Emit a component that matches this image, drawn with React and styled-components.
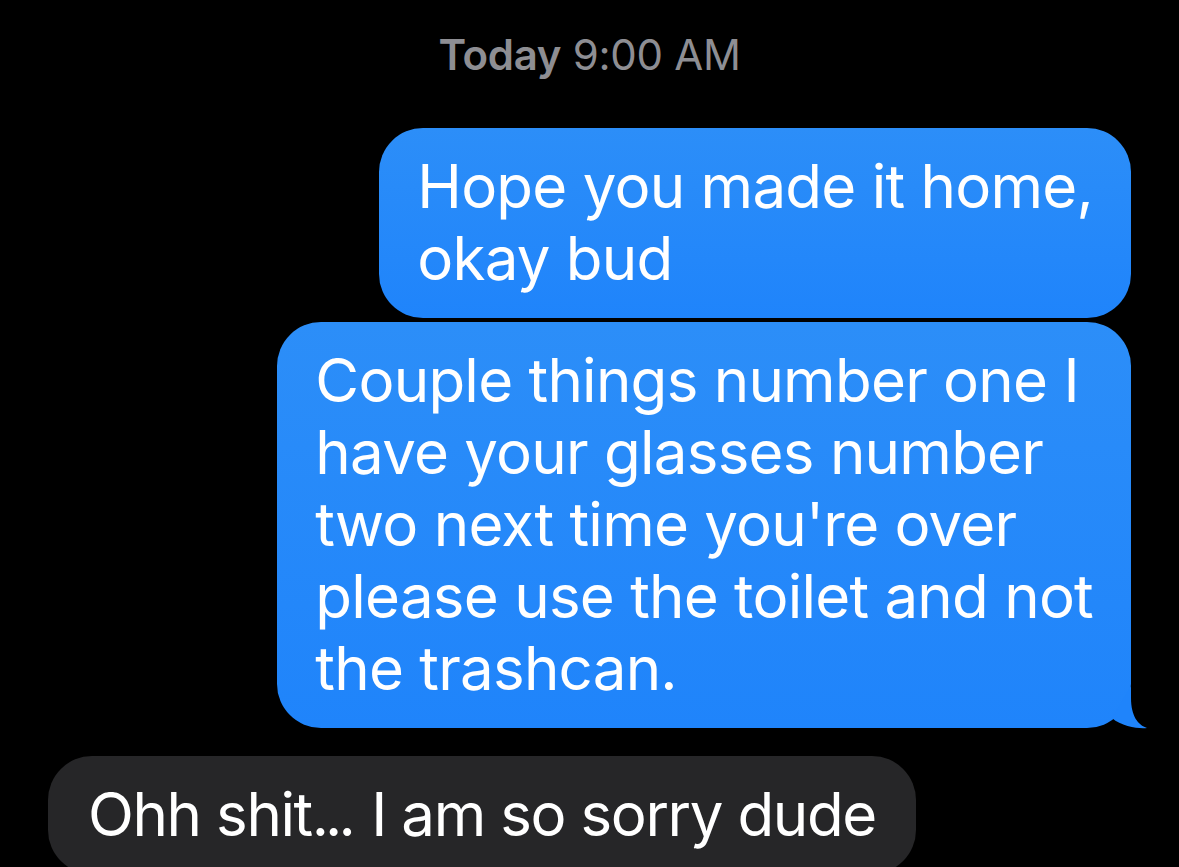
import React from 'react';
import styled, {createGlobalStyle} from 'styled-components';

const GlobalStyle = createGlobalStyle`
    html, body {
        margin:0;
        padding:0;
        background:#000;
        overflow:hidden;
    }
    body {
        font-family: Inter, "Noto Sans", "Liberation Sans", sans-serif;
        -webkit-font-smoothing: antialiased;
    }
`

const Thread = styled.div`
    width:1179px;
    height:867px;
    box-sizing:border-box;
    padding:30px 48px 0;
    display:flex;
    flex-direction:column;
`

const Stamp = styled.div`
    text-align:center;
    color:#8e8e93;
    font-size:42px;
    line-height:50px;
    letter-spacing:-0.3px;
    margin-bottom:48px;

    b{
        font-weight:600;
    }
`

const Row = styled.div`
    display:flex;
    justify-content:${p => p.$mine ? 'flex-end' : 'flex-start'};
    margin-top:${p => p.$gap || 0}px;
`

const Bubble = styled.div`
    position:relative;
    box-sizing:border-box;
    padding:${p => p.$mine ? '22px 38px 24px' : '22px 40px 24px'};
    border-radius:44px;
    font-size:60px;
    line-height:72px;
    letter-spacing:${p => p.$mine ? '-0.75px' : '-1.4px'};
    color:#fff;
    background:${p => p.$mine ? 'linear-gradient(180deg, #2c8ef8 0%, #1f84fb 100%)' : '#262628'};
    white-space:nowrap;
`

const Line = styled.div``

const Dots = styled.span`
    letter-spacing:-4px;
    margin-right:4px;
`

const Tail = styled.svg`
    position:absolute;
    right:-17px;
    bottom:0;
    width:50px;
    height:42px;
    overflow:visible;
`

const messages = [
    {mine:true, gap:0, lines:['Hope you made it home,', 'okay bud']},
    {mine:true, gap:4, tail:true, lines:[
        'Couple things number one I',
        'have your glasses number',
        "two next time you're over",
        'please use the toilet and not',
        'the trashcan.'
    ]},
    {mine:false, gap:28, lines:[<>Ohh shit<Dots>...</Dots> I am so sorry dude</>]},
]

export default function App(){
    return(
    <>
    <GlobalStyle/>
    <Thread>
        <Stamp><b>Today</b> 9:00 AM</Stamp>
        {messages.map((m, i) => (
            <Row key={i} $mine={m.mine} $gap={m.gap}>
                <Bubble $mine={m.mine}>
                    {m.lines.map((l, j) => <Line key={j}>{l}</Line>)}
                    {m.tail ? (
                        <Tail viewBox="0 0 50 42">
                            <path d="M33 0 L33 12 C33 30 40 39 49 42 C42 43 24 41 14 32 Z" fill="#1f84fb"/>
                        </Tail>
                    ) : null}
                </Bubble>
            </Row>
        ))}
    </Thread>
    </>
    )
}
